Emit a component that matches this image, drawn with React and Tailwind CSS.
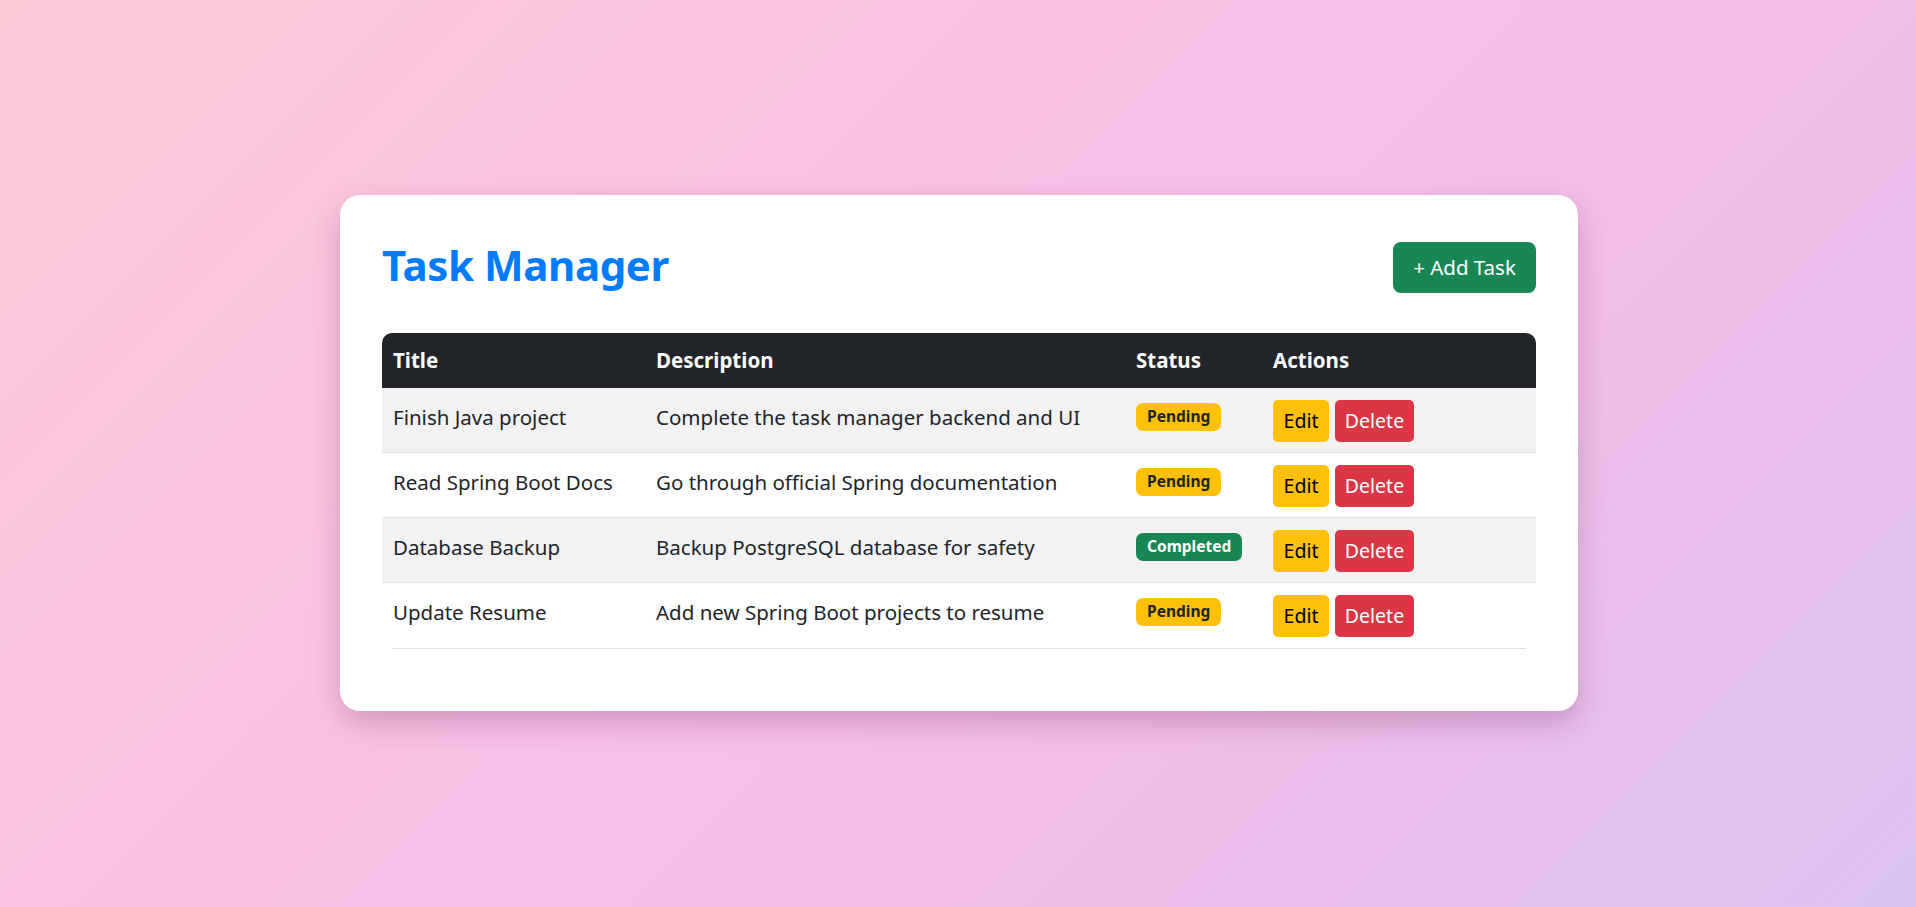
import React from "react";

const tasks = [
  { title: "Finish Java project", description: "Complete the task manager backend and UI", status: "Pending" },
  { title: "Read Spring Boot Docs", description: "Go through official Spring documentation", status: "Pending" },
  { title: "Database Backup", description: "Backup PostgreSQL database for safety", status: "Completed" },
  { title: "Update Resume", description: "Add new Spring Boot projects to resume", status: "Pending" },
];

const StatusBadge = ({ status }) => {
  const done = status === "Completed";
  return (
    <span
      className={
        "inline-flex h-[28px] items-center rounded-[7px] px-[11px] text-[15.5px] font-bold leading-none " +
        (done ? "bg-[#198754] text-white" : "bg-[#ffc107] text-[#212529]")
      }
    >
      {status}
    </span>
  );
};

const App = () => {
  return (
    <div
      className="min-h-[907px] w-full bg-[linear-gradient(135deg,#fdcad8_0%,#fac3e3_32%,#f6bfe9_55%,#f1bdea_68%,#dbc3ef_100%)] pt-[195px] text-[#212529]"
      style={{ fontFamily: '"Noto Sans", "Open Sans", sans-serif' }}
    >
      <div className="mx-auto w-[1238px] translate-x-[1px] rounded-[20px] bg-white px-[42px] pt-[42px] pb-[62px] shadow-[0_12px_30px_rgba(120,40,90,0.28)]">
        <div className="flex h-[61px] items-center justify-between">
          <h1 className="pb-[6px] text-[42px] font-bold leading-none tracking-[-0.4px] text-[#007bff]">Task Manager</h1>
          <button className="h-[51px] w-[143px] rounded-[8px] bg-[#198754] text-[20.5px] text-white">
            + Add Task
          </button>
        </div>

        <div className="mt-[35px]">
          <div className="grid h-[55px] grid-cols-[263px_480px_137px_275px] items-center rounded-t-[10px] bg-[#212529] text-[20.5px] font-bold text-white">
            <div className="pl-[11px]">Title</div>
            <div className="pl-[11px]">Description</div>
            <div className="pl-[11px]">Status</div>
            <div className="pl-[11px]">Actions</div>
          </div>

          {tasks.map((task, i) => (
            <div
              key={task.title}
              className={
                "grid h-[65px] grid-cols-[263px_480px_137px_275px] items-start pt-[12px] text-[20.5px] " +
                (i % 2 === 0 ? "bg-[#f2f2f2] " : "bg-white ") +
                (i < tasks.length - 1 ? "border-b border-[#dee2e6]" : "")
              }
            >
              <div className="pl-[11px] pt-[2px] leading-[30px]">{task.title}</div>
              <div className="pl-[11px] pt-[2px] leading-[30px]">{task.description}</div>
              <div className="flex h-[30px] items-center pl-[11px] pt-[4px]">
                <StatusBadge status={task.status} />
              </div>
              <div className="flex gap-[6px] pl-[11px]">
                <button className="h-[42px] w-[56px] rounded-[5px] bg-[#ffc107] text-[19.5px] text-black">Edit</button>
                <button className="h-[42px] w-[79px] rounded-[5px] bg-[#dc3545] text-[19.5px] text-white">Delete</button>
              </div>
            </div>
          ))}
          <div className="mx-[10px] border-b border-[#dee2e6]"></div>
        </div>
      </div>
    </div>
  );
};

export default App;
